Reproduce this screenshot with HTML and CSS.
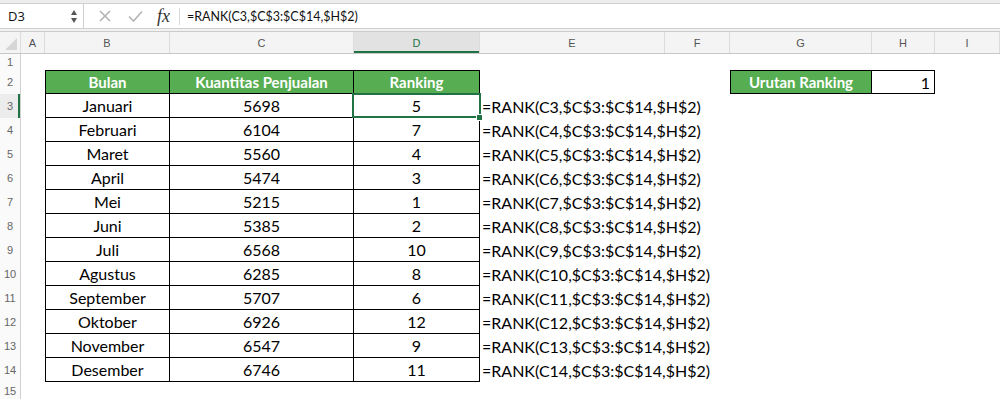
FILE: index.html
```html
<!DOCTYPE html>
<html lang="id">
<head>
  <meta charset="UTF-8">
  <title>RANK - Urutan Ranking</title>
  <link rel="stylesheet" href="styles.css">
</head>
<body>
  <div class="formula-bar">
    <div class="name-box">
      <span>D3</span>
      <span class="spin"><i class="up"></i><i class="down"></i></span>
    </div>
    <div class="fx-btns">
      <svg class="ico" width="12" height="12" viewBox="0 0 12 12"><path d="M1 1 L11 11 M11 1 L1 11" stroke="#b4b4b4" stroke-width="1.6" fill="none"/></svg>
      <svg class="ico" width="15" height="12" viewBox="0 0 15 12"><path d="M1 6.5 L5.5 11 L14 1.5" stroke="#b4b4b4" stroke-width="1.6" fill="none"/></svg>
      <span class="fx">fx</span>
    </div>
    <div class="formula">=RANK(C3,$C$3:$C$14,$H$2)</div>
  </div>

  <div class="sheet">
    <div class="row heads">
      <div class="corner"><i></i></div>
      <div class="ch">A</div>
      <div class="ch">B</div>
      <div class="ch">C</div>
      <div class="ch active">D</div>
      <div class="ch">E</div>
      <div class="ch">F</div>
      <div class="ch">G</div>
      <div class="ch">H</div>
      <div class="ch">I</div>
    </div>

    <div class="row r1"><div class="rh">1</div></div>

    <div class="row">
      <div class="rh">2</div>
      <div class="c cB t top hd">Bulan</div>
      <div class="c cC t top hd">Kuantitas Penjualan</div>
      <div class="c cD t top hd">Ranking</div>
      <div class="c cG t top hd lft">Urutan Ranking</div>
      <div class="c cH t top num">1</div>
    </div>

    <div class="row">
      <div class="rh sel">3</div>
      <div class="c cB t">Januari</div>
      <div class="c cC t">5698</div>
      <div class="c cD t cur">5</div>
      <div class="c cE f">=RANK(C3,$C$3:$C$14,$H$2)</div>
    </div>
    <div class="row">
      <div class="rh">4</div>
      <div class="c cB t">Februari</div>
      <div class="c cC t">6104</div>
      <div class="c cD t">7</div>
      <div class="c cE f">=RANK(C4,$C$3:$C$14,$H$2)</div>
    </div>
    <div class="row">
      <div class="rh">5</div>
      <div class="c cB t">Maret</div>
      <div class="c cC t">5560</div>
      <div class="c cD t">4</div>
      <div class="c cE f">=RANK(C5,$C$3:$C$14,$H$2)</div>
    </div>
    <div class="row">
      <div class="rh">6</div>
      <div class="c cB t">April</div>
      <div class="c cC t">5474</div>
      <div class="c cD t">3</div>
      <div class="c cE f">=RANK(C6,$C$3:$C$14,$H$2)</div>
    </div>
    <div class="row">
      <div class="rh">7</div>
      <div class="c cB t">Mei</div>
      <div class="c cC t">5215</div>
      <div class="c cD t">1</div>
      <div class="c cE f">=RANK(C7,$C$3:$C$14,$H$2)</div>
    </div>
    <div class="row">
      <div class="rh">8</div>
      <div class="c cB t">Juni</div>
      <div class="c cC t">5385</div>
      <div class="c cD t">2</div>
      <div class="c cE f">=RANK(C8,$C$3:$C$14,$H$2)</div>
    </div>
    <div class="row">
      <div class="rh">9</div>
      <div class="c cB t">Juli</div>
      <div class="c cC t">6568</div>
      <div class="c cD t">10</div>
      <div class="c cE f">=RANK(C9,$C$3:$C$14,$H$2)</div>
    </div>
    <div class="row">
      <div class="rh">10</div>
      <div class="c cB t">Agustus</div>
      <div class="c cC t">6285</div>
      <div class="c cD t">8</div>
      <div class="c cE f">=RANK(C10,$C$3:$C$14,$H$2)</div>
    </div>
    <div class="row">
      <div class="rh">11</div>
      <div class="c cB t">September</div>
      <div class="c cC t">5707</div>
      <div class="c cD t">6</div>
      <div class="c cE f">=RANK(C11,$C$3:$C$14,$H$2)</div>
    </div>
    <div class="row">
      <div class="rh">12</div>
      <div class="c cB t">Oktober</div>
      <div class="c cC t">6926</div>
      <div class="c cD t">12</div>
      <div class="c cE f">=RANK(C12,$C$3:$C$14,$H$2)</div>
    </div>
    <div class="row">
      <div class="rh">13</div>
      <div class="c cB t">November</div>
      <div class="c cC t">6547</div>
      <div class="c cD t">9</div>
      <div class="c cE f">=RANK(C13,$C$3:$C$14,$H$2)</div>
    </div>
    <div class="row">
      <div class="rh">14</div>
      <div class="c cB t">Desember</div>
      <div class="c cC t">6746</div>
      <div class="c cD t">11</div>
      <div class="c cE f">=RANK(C14,$C$3:$C$14,$H$2)</div>
    </div>

    <div class="row r15"><div class="rh">15</div></div>
  </div>
</body>
</html>
```

FILE: styles.css
```css
:root {
  --cols: 21px 24px 125px 184px 126px 185px 65px 142px 63px 65px;
  --green: #57ad52;
  --sel: #217346;
}
html, body {
  margin: 0; padding: 0;
  background: #fff;
  overflow: hidden;
}
body {
  font-family: 'Lato', 'Liberation Sans', sans-serif;
  color: #000;
  border-top: 3px solid #ededed;
}

/* formula bar */
.formula-bar {
  display: flex; align-items: stretch;
  height: 24px;
  border-top: 1px solid #d0d0d0;
  border-bottom: 1px solid #cfcfcf;
  font-size: 13px; color: #111;
}
.name-box {
  width: 84px; box-sizing: border-box;
  display: flex; align-items: center; justify-content: space-between;
  padding: 0 6px 0 8px;
  border-right: 1px solid #cfcfcf;
  font-family: 'Open Sans', 'Liberation Sans', sans-serif;
}
.spin { display: flex; flex-direction: column; gap: 3px; }
.spin i { width: 0; height: 0; border-left: 3.5px solid transparent; border-right: 3.5px solid transparent; }
.spin .up { border-bottom: 5px solid #555; }
.spin .down { border-top: 5px solid #555; }
.fx-btns {
  display: flex; align-items: center;
  padding-left: 15px; width: 97px; box-sizing: border-box;
}
.fx-btns .ico { margin-right: 17px; }
.fx-btns .ico + .ico { margin-right: 14px; }
.fx {
  font-family: 'Liberation Serif', serif; font-style: italic;
  font-size: 18px; color: #333;
  padding-right: 9px; border-right: 1px solid #d8d8d8;
  line-height: 17px;
}
.formula { display: flex; align-items: center; padding-left: 6px; font-size: 12.5px; }

/* sheet */
.sheet { border-top: 2px solid #f2f2f2; }
.row {
  display: grid;
  grid-template-columns: var(--cols);
  height: 24px;
}
.heads {
  height: 21px;
  background: #f4f4f4;
  border-top: 1px solid #cbcbcb;
  border-bottom: 1px solid #c8c8c8;
  font-family: 'Liberation Sans', sans-serif;
  font-size: 11px; color: #555;
}
.ch {
  display: flex; align-items: center; justify-content: center;
  border-right: 1px solid #dcdcdc;
}
.ch.active {
  background: #e2e2e2; color: var(--sel);
  box-shadow: inset 0 -2px 0 var(--sel);
}
.corner { position: relative; border-right: 1px solid #dcdcdc; }
.corner i {
  position: absolute; right: 3px; bottom: 3px;
  width: 0; height: 0;
  border-left: 12px solid transparent; border-bottom: 12px solid #d6d6d6;
}
.r1 { height: 16px; }
.r15 { height: 18px; }
.rh {
  grid-column: 1;
  display: flex; align-items: center; justify-content: center;
  font-family: 'Liberation Sans', sans-serif;
  font-size: 11px; color: #666;
  background: #fafafa;
  border-right: 1px solid #d0d0d0;
}
.rh.sel { box-shadow: inset -2px 0 0 var(--sel); background: #ececec; }

.c {
  display: flex; align-items: center; justify-content: center;
  font-size: 16px; white-space: nowrap;
  box-sizing: border-box;
}
.cB { grid-column: 3; }
.cC { grid-column: 4; }
.cD { grid-column: 5; }
.cE { grid-column: 6 / 8; }
.cG { grid-column: 8; }
.cH { grid-column: 9; }

.t { border-right: 1px solid #000; border-bottom: 1px solid #000; }
.cB.t, .cG.t { border-left: 1px solid #000; }
.top { border-top: 1px solid #000; }
.hd { background: var(--green); color: #fff; font-weight: 700; font-size: 15px; }
.num { justify-content: flex-end; padding-right: 4px; }
.f { justify-content: flex-start; padding-left: 2px; }

.cur { position: relative; }
.cur::after {
  content: ''; position: absolute;
  left: -2px; top: -1px; right: -2px; bottom: -1px;
  border: 2px solid var(--sel);
}
.cur::before {
  content: ''; position: absolute;
  right: -4px; bottom: -4px;
  width: 5px; height: 5px;
  background: var(--sel); border: 1px solid #fff;
  z-index: 1;
}
```
